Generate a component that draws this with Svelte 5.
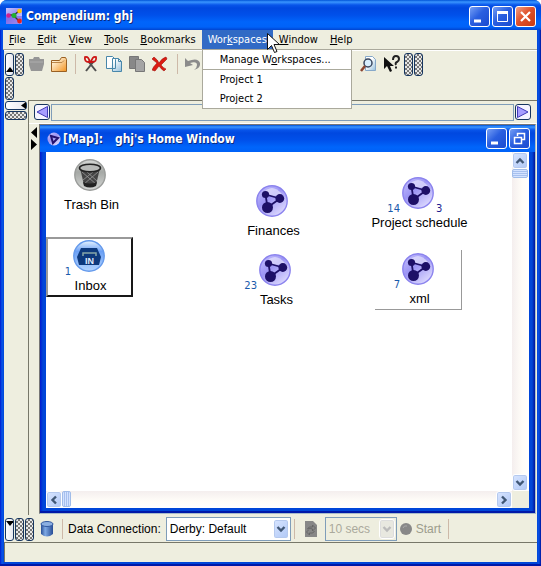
<script>
  const menus = [
    ['', 'F', 'ile'], ['', 'E', 'dit'], ['', 'V', 'iew'], ['', 'T', 'ools'],
    ['', 'B', 'ookmarks'], ['Wor', 'k', 'spaces'], ['', 'W', 'indow'], ['', 'H', 'elp']
  ];
  const nodes = [
    { kind: 'trash', label: 'Trash Bin', x: 28, y: 7 },
    { kind: 'inbox', label: 'Inbox', x: 27, y: 88, left: '1', frame: 'raised' },
    { kind: 'map', label: 'Finances', x: 210, y: 33 },
    { kind: 'map', label: 'Tasks', x: 213, y: 102, left: '23' },
    { kind: 'map', label: 'Project schedule', x: 356, y: 25, left: '14', right: '3' },
    { kind: 'map', label: 'xml', x: 356, y: 101, left: '7', frame: 'light' }
  ];
</script>

<svelte:head><title>Compendium: ghj</title></svelte:head>

{#snippet chevron(dir)}
  <svg class="chev {dir}" width="10" height="10" viewBox="0 0 10 10"><path d="M1.5 3 5 6.5 8.5 3" fill="none" stroke="currentColor" stroke-width="2.4" /></svg>
{/snippet}

{#snippet mapIcon()}
  <svg width="32" height="32" viewBox="0 0 32 32">
    <circle cx="16" cy="16" r="15.2" fill="url(#violet)" stroke="#8b83ee" stroke-width="1.4" />
    <path d="M6 9Q16-3 26 9Q16 13 6 9Z" fill="#fff" opacity=".5" />
    <path d="M9.5 9.5 24 13.5 11.5 22.5Z" fill="none" stroke="#1d1067" stroke-width="1.8" />
    <circle cx="9.5" cy="9.5" r="3.6" fill="#1d1067" /><circle cx="23.8" cy="13.5" r="4.4" fill="#1d1067" /><circle cx="11.5" cy="22.5" r="5.5" fill="#1d1067" />
  </svg>
{/snippet}

<svg class="defs" width="0" height="0" aria-hidden="true">
  <defs>
    <linearGradient id="violet" x1="0" y1="0" x2=".8" y2="1"><stop offset="0" stop-color="#c9c4ff" /><stop offset=".45" stop-color="#9c95f4" /><stop offset="1" stop-color="#e2dfff" /></linearGradient>
    <linearGradient id="grey" x1="0" y1="0" x2="0" y2="1"><stop offset="0" stop-color="#d8dad8" /><stop offset=".4" stop-color="#a5a8a5" /><stop offset="1" stop-color="#d5d7d5" /></linearGradient>
    <linearGradient id="sky" x1="0" y1="0" x2="0" y2="1"><stop offset="0" stop-color="#e8f4ff" /><stop offset=".35" stop-color="#6ba0f5" /><stop offset="1" stop-color="#b4d5ff" /></linearGradient>
    <linearGradient id="gold" x1="0" y1="0" x2="1" y2="1"><stop offset=".2" stop-color="#fff2d8" /><stop offset="1" stop-color="#f3921e" /></linearGradient>
    <linearGradient id="paper" x1="0" y1="0" x2="1" y2="1"><stop offset=".4" stop-color="#fff" /><stop offset="1" stop-color="#94bfdc" /></linearGradient>
    <linearGradient id="drum" x1="0" y1="0" x2="1" y2="0"><stop offset="0" stop-color="#294f96" /><stop offset=".35" stop-color="#7ea9e4" /><stop offset="1" stop-color="#274d96" /></linearGradient>
  </defs>
</svg>

<main class="window">
  <header class="titlebar">
    <svg width="16" height="16" viewBox="0 0 16 16">
      <rect width="16" height="16" fill="url(#violet)" /><rect y="8" width="16" height="8" fill="#7351e0" opacity=".6" />
      <path d="M3 7h5L13 3M8 8l5 5" stroke="#333" stroke-width="1.4" fill="none" />
      <circle cx="2.5" cy="7.5" r="2.3" fill="#cf2092" /><circle cx="8" cy="7.5" r="2.5" fill="#22ae31" /><circle cx="13.5" cy="3" r="2.3" fill="#ffc400" /><circle cx="13.5" cy="13" r="2.4" fill="#e32320" />
    </svg>
    <h1>Compendium: ghj</h1>
    <button class="cap" aria-label="Minimize"><svg width="19" height="19"><path d="M4 14h7" stroke="#fff" stroke-width="3" /></svg></button>
    <button class="cap" aria-label="Maximize"><svg width="19" height="19"><path d="M4.5 5v9.5h10V5" fill="none" stroke="#fff" /><path d="M4 5.5h11" stroke="#fff" stroke-width="3" /></svg></button>
    <button class="cap close" aria-label="Close"><svg width="19" height="19"><path d="m5 5 9 9m0-9-9 9" stroke="#fff" stroke-width="2.2" /></svg></button>
  </header>

  <nav class="menubar">
    {#each menus as [a, k, b]}
      <div class="menu">
        <button class:open={k === 'k'}>{a}<u>{k}</u>{b}</button>
        {#if k === 'k'}
          <div class="popup">
            <button>Manage W<u>o</u>rkspaces...</button>
            <hr />
            <button>Project 1</button>
            <button>Project 2</button>
          </div>
          <svg class="pointer" width="13" height="21" viewBox="0 0 13 21"><path d="M.5.5v16l4-4 3 7 2.5-1-3-7h5.5z" fill="#fff" stroke="#111" /></svg>
        {/if}
      </div>
    {/each}
  </nav>

  <section class="toolbars">
    <div class="bar">
      <button class="pill" aria-label="Collapse toolbar"><svg width="8" height="20"><path d="m0 18 4-5 4 5z" /></svg></button>
      <span class="grip"></span>
      <button class="tool" aria-label="Open briefcase"><svg width="18" height="18"><path d="M2 4h4l1-2h5l1 2h4v5l-2 7H4L2 10z" fill="#969696" /><path d="m3 7 13 0" stroke="#adadad" /></svg></button>
      <button class="tool" aria-label="Open folder"><svg width="18" height="18"><path d="M1.500 5.500h8l2-3h4l1 2v12h-15z" fill="url(#gold)" stroke="#996023" /><path d="M2 7.500h10l2-2" stroke="#bb874a" fill="none" /></svg></button>
      <i class="sep"></i>
      <button class="tool" aria-label="Cut"><svg width="18" height="18"><path d="m5 6 8 10M11 6 3 16" stroke="#505050" stroke-width="2" /><path d="M6 7Q1 7 2 2q4-1 5 6m2-1q5 0 4-5-4-1-5 6" fill="none" stroke="#cc1515" stroke-width="1.8" /></svg></button>
      <button class="tool" aria-label="Copy"><svg width="18" height="18"><path d="M.5 1.500h6l3 3v9h-9z M6.500 3.500h6l3 3v10h-9z" fill="url(#paper)" stroke="#4887aa" /><path d="M12.500 3.500v3h3" fill="none" stroke="#4887aa" /></svg></button>
      <button class="tool" aria-label="Paste"><svg width="18" height="18"><path d="M.5 1.500h9v12h-9z" fill="#888" stroke="#777" /><path d="M6.500 4.500h6l3 3v9h-9z" fill="#a4a4a4" stroke="#777" /></svg></button>
      <button class="tool" aria-label="Delete"><svg width="18" height="18"><path d="M2 2q4 3 5 6 3-5 7-6l1 2-6 6q2 3 5 4l-2 2q-3-2-5-5l-4 5-3-1q1-3 5-7L0 4z" fill="#dc1b13" stroke="#9f120d" stroke-width=".6" /></svg></button>
      <i class="sep"></i>
      <button class="tool" aria-label="Undo"><svg width="18" height="18"><path d="M0 3v9l8-2-3-2q7-2 7 2 0 3-3 5 7-2 6-7Q13 2 3 6z" fill="#8b8b8b" /></svg></button>
      <span class="covered"></span>
      <button class="tool" aria-label="Image"><svg width="18" height="18"><path d="M5 3h8v13H3z" fill="#777" /><path d="M8 13h6" stroke="#35bd44" stroke-width="3" /></svg></button>
      <button class="tool" aria-label="Search"><svg width="18" height="18"><path d="M5.500 1.500h7l3 3v11h-10z" fill="url(#paper)" stroke="#86a8c9" /><circle cx="8" cy="8" r="4" fill="#d8efff" stroke="#38465e" stroke-width="1.500" /><path d="m5 11-4 5" stroke="#8b4530" stroke-width="2.500" /></svg></button>
      <button class="tool" aria-label="What is this"><svg width="18" height="18"><path d="M1 2v12l3-3 3 6 2-1-2-5h4z" fill="#111" /><path d="M10 5q0-4 3-4t3 3q0 2-2 3t-1 3m0 1.500v2" stroke="#222" stroke-width="2" fill="none" /></svg></button>
      <span class="grip"></span>
      <span class="grip"></span>
    </div>
    <div class="bar"><span class="grip"></span></div>
  </section>

  <section class="workspace">
    <aside>
      <button class="pill flat" aria-label="Collapse side bar"><svg width="20" height="8"><path d="m20 0-5 3.500 5 3.500z" /></svg></button>
      <span class="grip flat"></span>
    </aside>
    <div class="desk">
      <div class="history">
        <button aria-label="Back"><svg width="14" height="14"><path d="M12.500 1.500v11L2 7z" fill="#a79dff" stroke="#413ab7" /></svg></button>
        <div class="track"></div>
        <button aria-label="Forward"><svg width="14" height="14"><path d="M1.500 1.500v11L12 7z" fill="#a79dff" stroke="#413ab7" /></svg></button>
      </div>
      <div class="split">
        <div class="handles">
          <svg width="7" height="24"><path d="M6 1v11L0 6.500zM0 13v11l6-5.500z" /></svg>
        </div>
        <article class="inner">
          <header class="titlebar small">
            <svg width="14" height="14"><circle cx="7" cy="7" r="6.500" fill="url(#violet)" /><path d="m4 4 7 2-5 5z" stroke="#24126f" stroke-width="2" fill="none" /></svg>
            <h2><span>[Map]:</span> <span>ghj's Home Window</span></h2>
            <button class="cap" aria-label="Minimize map"><svg width="19" height="19"><path d="M4 14h7" stroke="#fff" stroke-width="3" /></svg></button>
            <button class="cap" aria-label="Restore map"><svg width="19" height="19"><path d="M7.500 7V4.500h7v6H12M4.500 8.500h7v6h-7z" fill="none" stroke="#fff" stroke-width="1.500" /></svg></button>
          </header>
          <div class="panes">
            <div class="canvas">
              {#each nodes as n}
                <div class="node {n.frame ?? ''}" style="left:{n.x}px;top:{n.y}px">
                  {#if n.kind === 'map'}
                    {@render mapIcon()}
                  {:else if n.kind === 'trash'}
                    <svg width="32" height="32" viewBox="0 0 32 32">
                      <circle cx="16" cy="16" r="15.2" fill="url(#grey)" stroke="#9a9c9a" stroke-width="1.400" />
                      <path d="M6 9l4 17q6 4 12 0l4-17z" fill="#444" />
                      <path d="m8 13 14 12M13 13l10 9M24 13 10 25M19 13 9 21" stroke="#999" stroke-width=".8" />
                      <path d="m9 23 1 4q6 3 12 0l1-4q-7 3-14 0z" fill="#222" />
                      <ellipse cx="16" cy="9" rx="10.500" ry="3.800" fill="#b8bab8" stroke="#222" stroke-width="1.600" />
                    </svg>
                  {:else}
                    <svg width="32" height="32" viewBox="0 0 32 32">
                      <circle cx="16" cy="16" r="15.2" fill="url(#sky)" stroke="#659aec" stroke-width="1.400" />
                      <path d="M8 8h16l4 9-2 8H6l-2-8z" fill="#0d397d" />
                      <path d="M10 16v-3h13v3" fill="none" stroke="#86a6a8" stroke-width="1.500" />
                      <text x="16.500" y="24" text-anchor="middle" font-size="9" font-weight="bold" fill="#e3efff">IN</text>
                    </svg>
                  {/if}
                  {#if n.left}<span class="count">{n.left}</span>{/if}
                  {#if n.right}<span class="count after">{n.right}</span>{/if}
                  <span class="label">{n.label}</span>
                </div>
              {/each}
            </div>
            <div class="scroll v">
              <button aria-label="Scroll up">{@render chevron('up')}</button>
              <span class="thumb"></span>
              <button class="end" aria-label="Scroll down">{@render chevron('down')}</button>
            </div>
            <div class="scroll h">
              <button aria-label="Scroll left">{@render chevron('left')}</button>
              <span class="thumb"></span>
              <button class="end" aria-label="Scroll right">{@render chevron('right')}</button>
            </div>
          </div>
        </article>
      </div>
    </div>
  </section>

  <footer>
    <div class="bar connection">
      <button class="pill" aria-label="Collapse data bar"><svg width="8" height="20"><path d="m0 2 4 5 4-5z" /></svg></button>
      <span class="grip"></span>
      <span class="grip"></span>
      <svg class="db" width="14" height="18"><path d="M1 4v10q6 5 12 0V4z" fill="url(#drum)" /><ellipse cx="7" cy="4" rx="6" ry="2.500" fill="#8bafe1" stroke="#31599f" /></svg>
      <i class="sep"></i>
      <label for="conn">Data Connection:</label>
      <span class="combo"><select id="conn"><option>Derby: Default</option></select><b>{@render chevron('down')}</b></span>
      <i class="sep"></i>
      <button class="tool refresh" disabled aria-label="Refresh"><svg width="14" height="18"><path d="M1 1h8l4 4v12H1z" fill="#878787" /><path d="M3.500 9q1-3 5-2V5l3 3-3 3V9q-2-1-5 0m7 2q-1 3-5 2v2l-3-3 2-2" fill="none" stroke="#666" /></svg></button>
      <span class="combo off"><select disabled aria-label="Refresh interval"><option>10 secs</option></select><b>{@render chevron('down')}</b></span>
      <button class="start" disabled><svg width="12" height="12"><circle cx="6" cy="6" r="6" fill="#888" /><path d="M3 5q1-3 4-2" stroke="#aaa" fill="none" /></svg>Start</button>
      <i class="sep"></i>
    </div>
    <div class="status"></div>
  </footer>
</main>

<style>
  :global(body) { background: #fff; }
  *, ::before { box-sizing: border-box; }
  .defs { position: absolute; }
  svg { display: block; flex: none; }
  button { border: 0; padding: 0; margin: 0; background: none; font: inherit; color: inherit; }
  .window {
    min-height: 100vh; display: flex; flex-direction: column; padding: 0 4px 4px;
    border-radius: 7px 7px 0 0; color: #000; font: 13px/16px "Liberation Sans", Arial, sans-serif;
    background: linear-gradient(90deg, #0019cf, #0855e8 2px, #0046d8 4px, #0046d8 calc(100% - 4px), #0850e6 calc(100% - 2px), #00139a);
    box-shadow: inset 0 -2px #0018a8;
  }
  .titlebar {
    display: flex; align-items: center; gap: 2px; height: 30px; margin: 0 -4px; padding: 2px 5px 0 6px;
    border-radius: 7px 7px 0 0; color: #fff;
    background: linear-gradient(#0053d8, #3a95ff 2px, #0855ea 5px, #0048e0 8px, #0050ea 15px, #0065fb 22px, #0062f8 27px, #0044d0);
  }
  h1, h2 { flex: 1; margin: 0 0 0 2px; font: bold 12px/20px "DejaVu Sans Condensed", sans-serif; text-shadow: 1px 1px #0b2a7c; white-space: nowrap; }
  h2 { display: flex; gap: 12px; margin: 0; }
  .cap { width: 21px; height: 21px; border: 1px solid #fff; border-radius: 3px; background: linear-gradient(135deg, #769ff5, #2a5fe0 45%, #1b4bd0); }
  .close { background: linear-gradient(135deg, #f0a086, #e0512b 45%, #c93a12); }
  .menubar { display: flex; height: 20px; margin-left: -1px; padding-left: 0; background: #eeeedf; border-bottom: 1px solid #aaa99c; font: 11px/19px "DejaVu Sans Condensed", sans-serif; }
  .menu { position: relative; }
  .menu > button { height: 19px; padding: 0 6px; }
  .menu > .open { background: #316ac5; color: #fff; }
  .popup { position: absolute; z-index: 3; left: 0; top: 19px; width: 150px; border: 1px solid #aaa99c; background: #fff; }
  .popup button { display: block; width: 100%; height: 19px; padding-left: 17px; text-align: left; }
  hr { margin: 0; border: 0; border-top: 1px solid #aaa99c; }
  .pointer { position: absolute; z-index: 4; right: -7px; top: 3px; }
  .toolbars { height: 50px; padding: 1px 0 0 1px; background: #eeeedf; border-top: 1px solid #fff; }
  .bar { display: flex; align-items: center; gap: 1px; height: 24px; }
  .pill { width: 9px; height: 23px; border: 1px solid #16355f; border-radius: 3px; background: linear-gradient(90deg, #fff, #e8e8ee); }
  .pill svg { margin: 0 auto; width: 7px; }
  .grip { flex: none; width: 9px; height: 23px; border: 1px solid #16355f; border-radius: 3px; background: repeating-conic-gradient(#777 0 25%, #e8e8e8 0 50%) 0 0 / 4px 4px; }
  .flat { display: block; width: 22px; height: 9px; }
  .tool { width: 18px; height: 18px; margin: 0 2px; }
  .sep { flex: none; width: 1px; height: 20px; margin: 0 4px; background: #cdb9a8; }
  .covered { width: 128px; }
  .workspace { flex: 1; display: flex; background: #eeeedf; }
  aside { width: 24px; padding: 1px; display: flex; flex-direction: column; gap: 1px; }
  aside .pill svg { width: 20px; margin: 0; }
  .desk { flex: 1; min-width: 0; display: flex; flex-direction: column; border: 1px solid #777769; border-width: 1px 0 0 1px; }
  .history { display: flex; align-items: center; gap: 1px; height: 23px; padding: 0 6px 0 5px; border-bottom: 1px solid #fff; }
  .history button { width: 16px; height: 16px; border: 1px solid #16355f; border-radius: 3px; background: #f5f3ff; }
  .track { flex: 1; height: 17px; border: 1px solid #7f9db9; }
  .split { flex: 1; display: flex; }
  .handles { width: 10px; padding: 2px 0 0 2px; }
  .inner { flex: 1; min-width: 0; display: flex; flex-direction: column; margin: 0 1px 1px 0; padding: 0 6px 5px; border: 1px solid #888; border-color: #777 #a8bccb #a8bccb #777; background: linear-gradient(90deg, #0019cf, #0046d8 3px, #0046d8 calc(100% - 3px), #00139a); box-shadow: inset 0 -2px #0018a8; }
  .small { height: 27px; margin: 0 -6px; border-radius: 0; padding: 0 5px 0 7px; }
  .panes { flex: 1; display: grid; grid-template: 1fr 17px / 1fr 17px; background: #eeeedf; }
  .canvas { position: relative; background: #fff; overflow: hidden; }
  .node { position: absolute; width: 32px; height: 56px; }
  .label { position: absolute; top: 38px; left: 50%; transform: translateX(-50%); padding-left: 3px; white-space: nowrap; }
  .count { position: absolute; right: 34px; top: 26px; font: 10px/12px "DejaVu Sans", sans-serif; color: #1a5bab; }
  .after { right: auto; left: 34px; color: #1c1c90; }
  .raised::before, .light::before { content: ""; position: absolute; left: -27px; top: -3px; width: 87px; height: 60px; border: 2px solid; border-color: #999 #181818 #181818 #999; }
  .light::before { border: solid #999; border-width: 0 1px 1px 0; }
  .scroll { display: flex; background: linear-gradient(90deg, #f4eeee, #fffdf8 60%, #fff); }
  .v { flex-direction: column; }
  .h { background: linear-gradient(#f4eeee, #fffdf8 60%, #fff); }
  .scroll button, .combo b { display: grid; place-items: center; width: 16px; height: 17px; border: 1px solid #fff; border-radius: 3px; background: linear-gradient(135deg, #d8e5ff, #b0c8f6); color: #405775; box-shadow: inset 0 0 0 1px #b5c9ee; }
  .thumb { width: 16px; height: 9px; border: 1px solid #a0bce9; border-radius: 2px; background: repeating-linear-gradient(#d3e2ff 0 1px, #a7c0ee 1px 2px); }
  .h .thumb { width: 9px; height: 16px; background: repeating-linear-gradient(90deg, #d3e2ff 0 1px, #a7c0ee 1px 2px); }
  .v .end { margin-top: auto; }
  .h .end { margin-left: auto; }
  .up { transform: rotate(180deg); }
  .left { transform: rotate(90deg); }
  .right { transform: rotate(-90deg); }
  footer { background: #eeeedf; padding-top: 1px; }
  .connection { height: 26px; padding-left: 1px; font-size: 12px; }
  .db { margin: 0 3px 0 5px; }
  label { margin-right: 4px; white-space: nowrap; }
  .combo { position: relative; width: 125px; height: 24px; margin-right: -2px; }
  select { appearance: none; width: 100%; height: 100%; padding: 0 3px; border: 1px solid #7f9db9; border-radius: 0; background: #fff; color: #000; font: inherit; opacity: 1; }
  .combo b { position: absolute; right: 2px; top: 2px; height: 20px; pointer-events: none; }
  .off { width: 72px; margin: 0 2px 0 0; }
  .off select { background: #eeeedf; color: #aaa99c; }
  .off b { background: #e8e8e0; color: #bbb; box-shadow: inset 0 0 0 1px #ddd; }
  .refresh { margin-left: 4px; }
  .start { display: flex; align-items: center; gap: 4px; margin-right: 2px; color: #9c9c8c; }
  .status { height: 20px; border: 1px solid #777769; border-width: 1px 0 0 1px; }
</style>
